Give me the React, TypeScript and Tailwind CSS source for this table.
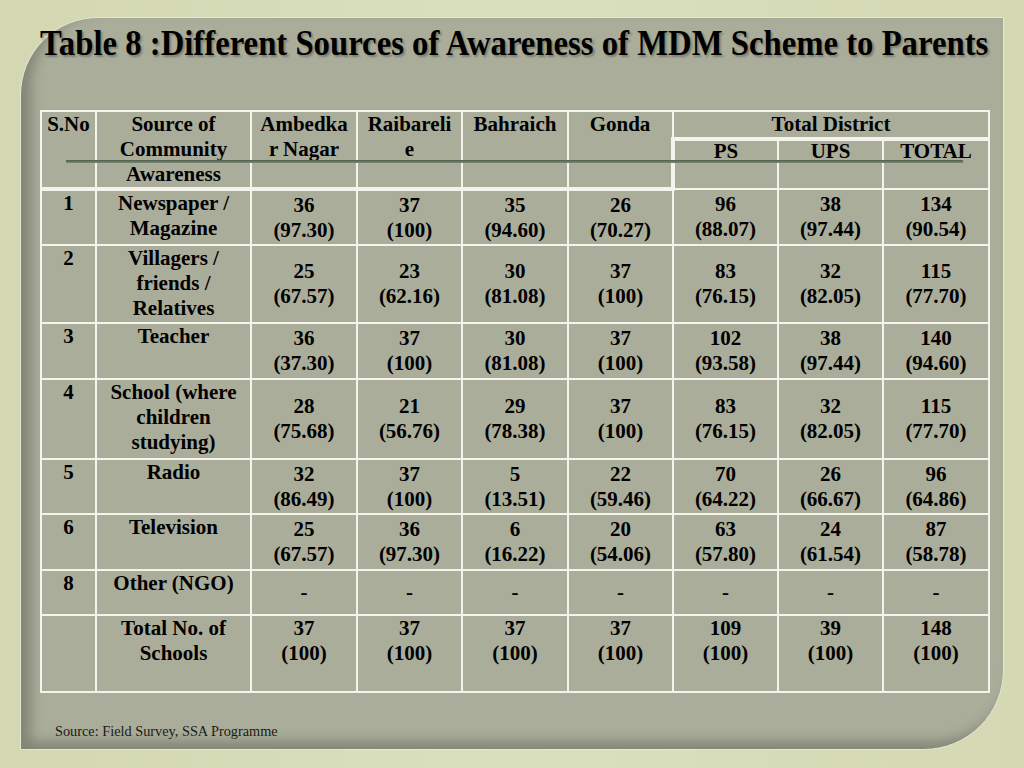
const rows = [
  {
    no: '1',
    src: ['Newspaper /', 'Magazine'],
    vals: [['36', '(97.30)'], ['37', '(100)'], ['35', '(94.60)'], ['26', '(70.27)'], ['96', '(88.07)'], ['38', '(97.44)'], ['134', '(90.54)']],
    h: 'h-[56px]',
  },
  {
    no: '2',
    src: ['Villagers /', 'friends /', 'Relatives'],
    vals: [['25', '(67.57)'], ['23', '(62.16)'], ['30', '(81.08)'], ['37', '(100)'], ['83', '(76.15)'], ['32', '(82.05)'], ['115', '(77.70)']],
    h: 'h-[78px]',
  },
  {
    no: '3',
    src: ['Teacher'],
    vals: [['36', '(37.30)'], ['37', '(100)'], ['30', '(81.08)'], ['37', '(100)'], ['102', '(93.58)'], ['38', '(97.44)'], ['140', '(94.60)']],
    h: 'h-[56px]',
  },
  {
    no: '4',
    src: ['School (where', 'children', 'studying)'],
    vals: [['28', '(75.68)'], ['21', '(56.76)'], ['29', '(78.38)'], ['37', '(100)'], ['83', '(76.15)'], ['32', '(82.05)'], ['115', '(77.70)']],
    h: 'h-[80px]',
  },
  {
    no: '5',
    src: ['Radio'],
    vals: [['32', '(86.49)'], ['37', '(100)'], ['5', '(13.51)'], ['22', '(59.46)'], ['70', '(64.22)'], ['26', '(66.67)'], ['96', '(64.86)']],
    h: 'h-[55px]',
  },
  {
    no: '6',
    src: ['Television'],
    vals: [['25', '(67.57)'], ['36', '(97.30)'], ['6', '(16.22)'], ['20', '(54.06)'], ['63', '(57.80)'], ['24', '(61.54)'], ['87', '(58.78)']],
    h: 'h-[56px]',
  },
  {
    no: '8',
    src: ['Other (NGO)'],
    vals: [['-'], ['-'], ['-'], ['-'], ['-'], ['-'], ['-']],
    h: 'h-[45px]',
  },
];

const totals = [['37', '(100)'], ['37', '(100)'], ['37', '(100)'], ['37', '(100)'], ['109', '(100)'], ['39', '(100)'], ['148', '(100)']];

const cell = 'border-2 border-[#f4f4ec] text-center align-top pt-0 px-0';

function Lines({ items }: { items: string[] }) {
  return (
    <>
      {items.map((t, i) => (
        <div key={i}>{t}</div>
      ))}
    </>
  );
}

export default function App() {
  return (
    <div className="w-[1024px] h-[768px] bg-gradient-to-r from-[#d3d8b2] via-[#dadfbd] to-[#d4d9b3] pt-[17px] pl-[20px]">
      <div className="relative w-[984px] h-[733px] bg-[#abad9b] rounded-tl-[78px] rounded-br-[80px] border border-[#e3e6d2] shadow-[inset_10px_-8px_12px_rgba(60,62,50,0.35)] pl-[19px] pt-[6px]">
        {/* title */}
        <h1 className="h-[86px] w-[948px] whitespace-nowrap font-['Liberation_Serif',serif] font-bold text-[35px] leading-[40px] text-black origin-left scale-x-[0.935] [text-shadow:2px_2px_2px_rgba(40,40,30,0.35)]">
          Table 8 :Different Sources of Awareness of MDM Scheme to Parents
        </h1>

        <table className="table-fixed border-collapse w-[948px] font-['Liberation_Serif',serif] font-bold text-[21px] leading-[25px] text-black">
          <colgroup>
            <col className="w-[55px]" />
            <col className="w-[155px]" />
            <col className="w-[106px]" />
            <col className="w-[105px]" />
            <col className="w-[106px]" />
            <col className="w-[105px]" />
            <col className="w-[105px]" />
            <col className="w-[105px]" />
            <col className="w-[106px]" />
          </colgroup>
          <tbody>
            <tr className="h-[24px]">
              <td rowSpan={2} className={`${cell} border-b-4`}>S.No</td>
              <td rowSpan={2} className={`${cell} border-b-4`}>
                <Lines items={['Source of', 'Community', 'Awareness']} />
              </td>
              <td rowSpan={2} className={`${cell} border-b-4`}>
                <Lines items={['Ambedka', 'r Nagar']} />
              </td>
              <td rowSpan={2} className={`${cell} border-b-4`}>
                <Lines items={['Raibareli', 'e']} />
              </td>
              <td rowSpan={2} className={`${cell} border-b-4`}>Bahraich</td>
              <td rowSpan={2} className={`${cell} border-b-4`}>Gonda</td>
              <td colSpan={3} className={`${cell} border-b-4`}>Total District</td>
            </tr>
            <tr className="h-[49px]">
              <td className={`${cell} border-l-4`}>
                <div className="-mt-[2px]">PS</div>
              </td>
              <td className={cell}>
                <div className="-mt-[2px]">UPS</div>
              </td>
              <td className={cell}>
                <div className="-mt-[2px]">TOTAL</div>
              </td>
            </tr>
            {rows.map((r) => (
              <tr key={r.no} className={r.h}>
                <td className={cell}>{r.no}</td>
                <td className={cell}>
                  <Lines items={r.src} />
                </td>
                {r.vals.map((v, i) => (
                  <td key={i} className={`${cell} !align-middle`}>
                    <Lines items={v} />
                  </td>
                ))}
              </tr>
            ))}
            <tr className="h-[77px]">
              <td className={cell}></td>
              <td className={cell}>
                <Lines items={['Total No. of', 'Schools']} />
              </td>
              {totals.map((v, i) => (
                <td key={i} className={cell}>
                  <Lines items={v} />
                </td>
              ))}
            </tr>
          </tbody>
        </table>

        <p className="mt-[30px] ml-[15px] font-['Liberation_Serif',serif] text-[14.3px] leading-[16px] text-[#1a1a14]">
          Source: Field Survey, SSA Programme
        </p>

        {/* template rule line over the header */}
        <div className="absolute left-[45px] top-[142px] w-[897px] h-[3px] bg-gradient-to-b from-[#4d5f4c] to-[#7a8a76]" />
      </div>
    </div>
  );
}
